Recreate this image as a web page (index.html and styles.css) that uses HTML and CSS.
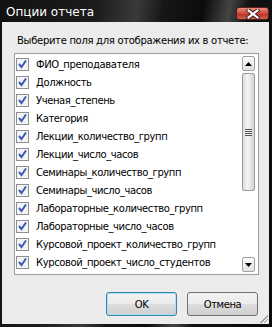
FILE: index.html
```html
<!doctype html>
<html lang="ru">
<head>
    <meta charset="UTF-8">
    <title>Опции отчета</title>
    <link rel="stylesheet" href="styles.css">
</head>
<body>
    <div class="window">
        <div class="titlebar">
            <span class="caption">Опции отчета</span>
            <span class="close">
                <svg width="14" height="10" viewBox="0 0 14 10"><path d="M2.5 1.5 L11.5 8.5 M11.5 1.5 L2.5 8.5" stroke="#3a1a1a" stroke-width="4" stroke-linecap="square"/><path d="M2.5 1.5 L11.5 8.5 M11.5 1.5 L2.5 8.5" stroke="#fff" stroke-width="2.2" stroke-linecap="square"/></svg>
            </span>
        </div>
        <div class="client">
            <p class="prompt">Выберите поля для отображения их в отчете:</p>
            <div class="listbox">
                <ul class="items">
                    <li><span class="check"></span>ФИО_преподавателя</li>
                    <li><span class="check"></span>Должность</li>
                    <li><span class="check"></span>Ученая_степень</li>
                    <li><span class="check"></span>Категория</li>
                    <li><span class="check"></span>Лекции_количество_групп</li>
                    <li><span class="check"></span>Лекции_число_часов</li>
                    <li><span class="check"></span>Семинары_количество_групп</li>
                    <li><span class="check"></span>Семинары_число_часов</li>
                    <li><span class="check"></span>Лабораторные_количество_групп</li>
                    <li><span class="check"></span>Лабораторные_число_часов</li>
                    <li><span class="check"></span>Курсовой_проект_количество_групп</li>
                    <li><span class="check"></span>Курсовой_проект_число_студентов</li>
                </ul>
                <div class="scrollbar">
                    <span class="sbtn"><svg width="7" height="4" viewBox="0 0 7 4"><path d="M0 4 L3.5 0 L7 4 Z" fill="#000"/></svg></span>
                    <span class="thumb"><span class="grip"></span></span>
                    <span class="track"></span>
                    <span class="sbtn"><svg width="7" height="4" viewBox="0 0 7 4"><path d="M0 0 L7 0 L3.5 4 Z" fill="#000"/></svg></span>
                </div>
            </div>
            <div class="buttons">
                <span class="btn default">OK</span>
                <span class="btn">Отмена</span>
            </div>
            <span class="resize"></span>
        </div>
    </div>
</body>
</html>
```
FILE: styles.css
```css
*{
    margin: 0;
    padding: 0;
}
ul, li{list-style: none;}
body{
    background: #000;
    font-family: "DejaVu Sans", "Liberation Sans", sans-serif;
    font-size: 10px;
    letter-spacing: -0.4px;
}
.window{
    width: 272px;
    height: 327px;
    display: flex;
    flex-direction: column;
    background: linear-gradient(100deg, #111 0%, #1c1c1c 30%, #3a3a3a 42%, #161616 50%, #0c0c0c 62%, #444 70%, #111 76%, #0a0a0a 100%);
}
.titlebar{
    height: 22px;
    display: flex;
    align-items: center;
    justify-content: space-between;
    padding: 0 3px 0 6px;
}
.caption{
    color: #fff;
    font-size: 12px;
    letter-spacing: 0;
    margin-top: 2px;
}
.close{
    width: 31px;
    height: 11px;
    align-self: flex-end;
    margin-bottom: 2px;
    border: 1px solid #5a2020;
    border-radius: 3px;
    background: linear-gradient(#e88a80, #c9493b 50%, #b52d22 51%, #d2604f);
    display: flex;
    align-items: center;
    justify-content: center;
}
.client{
    position: relative;
    flex: 1;
    margin: 0 3px 3px 2px;
    background: #ececec;
    padding: 12px 10px 0 12px;
}
.prompt{
    color: #000;
    padding-left: 3px;
    height: 19px;
    line-height: 14px;
    white-space: nowrap;
    letter-spacing: -0.3px;
}
.listbox{
    height: 220px;
    border: 1px solid #9c9c9c;
    background: #fff;
    display: flex;
}
.items{
    flex: 1;
    padding: 1px 0 0 1px;
    overflow: hidden;
}
.items li{
    height: 18px;
    display: flex;
    align-items: center;
    gap: 7px;
    color: #000;
    white-space: nowrap;
}
.check{
    width: 11px;
    height: 11px;
    border: 1px solid #8e8f8f;
    background: #f4f4f4 url("data:image/svg+xml,%3Csvg xmlns='http://www.w3.org/2000/svg' width='11' height='11'%3E%3Cpath d='M2 5 L4.5 8 L9 1.5' stroke='%233d5bb5' stroke-width='2' fill='none'/%3E%3C/svg%3E") no-repeat center;
    flex: none;
}
.scrollbar{
    width: 13px;
    margin: 2px 3px 2px 0;
    display: flex;
    flex-direction: column;
    gap: 2px;
}
.sbtn{
    height: 13px;
    border: 1px solid #a0a0a0;
    border-radius: 2px;
    background: linear-gradient(#fafafa, #e2e2e2);
    display: flex;
    align-items: center;
    justify-content: center;
}
.thumb{
    height: 116px;
    border: 1px solid #9a9a9a;
    border-radius: 2px;
    background: linear-gradient(90deg, #dcdcdc, #f4f4f4 40%, #e4e4e4 70%, #d4d4d4);
    display: flex;
    align-items: center;
    justify-content: center;
}
.grip{
    width: 7px;
    height: 7px;
    background: repeating-linear-gradient(#555 0 1px, transparent 1px 2px);
}
.track{
    flex: 1;
}
.buttons{
    display: flex;
    justify-content: flex-end;
    gap: 10px;
    padding-top: 17px;
    padding-right: 1px;
}
.btn{
    width: 69px;
    height: 22px;
    border: 1px solid #707070;
    border-radius: 3px;
    background: linear-gradient(#f2f2f2, #ebebeb 50%, #dddddd 51%, #cfcfcf);
    display: flex;
    align-items: center;
    justify-content: center;
    color: #000;
}
.btn.default{
    border-color: #3c7fb1;
    box-shadow: inset 0 0 0 1px #a8e4f7;
}
.resize{
    position: absolute;
    right: 1px;
    bottom: 1px;
    width: 8px;
    height: 8px;
    background: linear-gradient(135deg, transparent 50%, #a0a0a0 50%, #a0a0a0 57%, transparent 57%, transparent 70%, #a0a0a0 70%, #a0a0a0 77%, transparent 77%);
}
```
